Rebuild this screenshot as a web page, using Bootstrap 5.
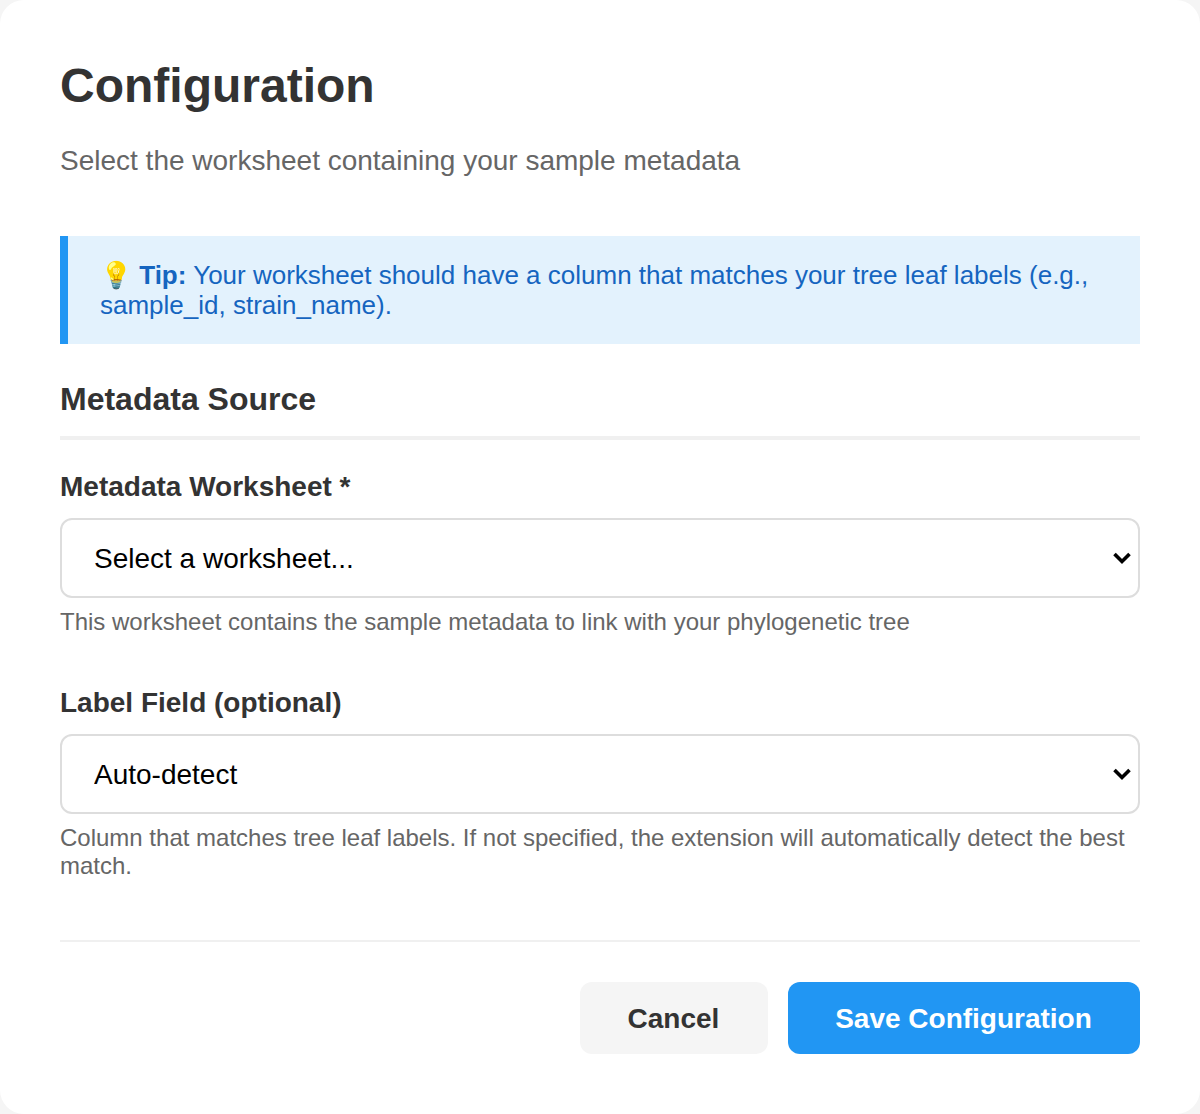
<!DOCTYPE html>
<html lang="en">
<head>
<meta charset="utf-8">
<title>Configuration</title>
<link href="https://cdn.jsdelivr.net/npm/bootstrap@5.3.0/dist/css/bootstrap.min.css" rel="stylesheet">
<style>
html, body { height: 100%; }
body { background: #f5f5f5; font-family: "Liberation Sans", Arial, sans-serif; color: #333; }
.sheet { width: 1200px; height: 1114px; background: #fff; border-radius: 24px; padding: 60px; }
.sheet-title { font-size: 48px; line-height: 52px; font-weight: 700; color: #333; margin: 0 0 33px; }
.sheet-sub { font-size: 28px; line-height: 32px; color: #666; margin: 0 0 59px; }
.tip-box { background: #e3f2fd; border-left: 8px solid #2196f3; color: #1565c0; font-size: 26px; line-height: 30px; padding: 24px 32px; margin-bottom: 37px; }
.sect-title { font-size: 32px; line-height: 36px; font-weight: 700; color: #333; padding-bottom: 19px; border-bottom: 4px solid #f0f0f0; margin: 0 0 31px; }
.fld-label { display: block; font-size: 28px; line-height: 32px; font-weight: 700; color: #333; margin-bottom: 15px; }
.fld-select.form-select { height: 80px; font-size: 28px; color: #000; padding: 2px 32px 0; border: 2px solid #ddd; border-radius: 12px;
  background-size: 22px 16px; background-position: right 5px center;
  background-image: url("data:image/svg+xml,%3Csvg xmlns='http://www.w3.org/2000/svg' viewBox='0 0 22 16'%3E%3Cpath d='M3.5 4l7.5 7.5 7.5-7.5' fill='none' stroke='%23000' stroke-width='3.6'/%3E%3C/svg%3E"); }
.fld-hint { font-size: 24px; line-height: 28px; color: #666; margin-top: 10px; }
.fld-gap { margin-bottom: 51px; }
.foot-bar { border-top: 2px solid #f0f0f0; margin-top: 60px; padding-top: 40px; gap: 20px; }
.act-btn { height: 72px; font-size: 28px; font-weight: 700; padding: 2px 1px 0 0; border: 0; border-radius: 12px; }
.act-cancel, .act-cancel:hover { width: 188px; background: #f5f5f5; color: #333; }
.act-save, .act-save:hover { width: 352px; background: #2196f3; color: #fff; }
</style>
</head>
<body>
<div class="sheet">
  <h1 class="sheet-title">Configuration</h1>
  <p class="sheet-sub">Select the worksheet containing your sample metadata</p>
  <div class="tip-box">💡 <strong>Tip:</strong> Your worksheet should have a column that matches your tree leaf labels (e.g., sample_id, strain_name).</div>
  <h2 class="sect-title">Metadata Source</h2>
  <div class="fld-gap">
    <label class="fld-label" for="ws">Metadata Worksheet *</label>
    <select class="form-select fld-select" id="ws"><option>Select a worksheet...</option></select>
    <div class="fld-hint">This worksheet contains the sample metadata to link with your phylogenetic tree</div>
  </div>
  <div>
    <label class="fld-label" for="lf">Label Field (optional)</label>
    <select class="form-select fld-select" id="lf"><option>Auto-detect</option></select>
    <div class="fld-hint">Column that matches tree leaf labels. If not specified, the extension will automatically detect the best match.</div>
  </div>
  <div class="foot-bar d-flex justify-content-end">
    <button type="button" class="btn act-btn act-cancel">Cancel</button>
    <button type="button" class="btn act-btn act-save">Save Configuration</button>
  </div>
</div>
<script src="https://cdn.jsdelivr.net/npm/bootstrap@5.3.0/dist/js/bootstrap.bundle.min.js"></script>
</body>
</html>
